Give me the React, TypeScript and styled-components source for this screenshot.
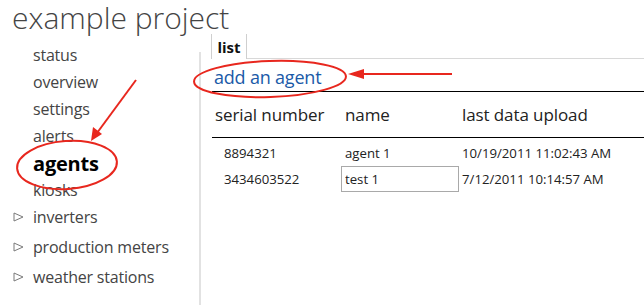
import React, { FC } from 'react';
import styled, { createGlobalStyle } from 'styled-components';

const GlobalStyle = createGlobalStyle`
  html, body {
    margin: 0;
    padding: 0;
    background: #fff;
  }
  body {
    font-family: "Open Sans", "Noto Sans", sans-serif;
    color: #333;
    width: 644px;
    height: 305px;
    overflow: hidden;
  }
`;

const Page = styled.div`
  position: relative;
  width: 644px;
  height: 305px;
`;

const Title = styled.h1`
  margin: 0;
  padding: 2px 0 0 12px;
  height: 32px;
  font-size: 30px;
  font-weight: 300;
  line-height: 32px;
  color: #444;
  letter-spacing: 0;
`;

const Body = styled.div`
  display: flex;
  align-items: flex-start;
`;

const Sidebar = styled.ul`
  list-style: none;
  margin: 0;
  padding: 8px 0 0 0;
  width: 199px;
  flex-shrink: 0;
`;

const NavItem = styled.li<{ $active?: boolean }>`
  padding-left: 33px;
  height: 27px;
  line-height: 27px;
  font-size: ${(p) => (p.$active ? '20px' : '16px')};
  font-weight: ${(p) => (p.$active ? 700 : 400)};
  color: ${(p) => (p.$active ? '#000' : '#444')};
  letter-spacing: ${(p) => (p.$active ? '-0.2px' : '-0.2px')};
`;

const TreeGroup = styled.div`
  margin-top: -2px;
`;

const TreeItem = styled.li`
  display: flex;
  align-items: center;
  height: 30px;
  padding-left: 13px;
  font-size: 16px;
  color: #444;
  letter-spacing: -0.2px;
`;

const Toggle = styled.svg`
  width: 11px;
  height: 10px;
  margin-right: 9px;
  flex-shrink: 0;
`;

const Main = styled.div`
  flex: 1;
  margin-top: 18px;
  border-left: 2px solid #e2e2e2;
  height: 253px;
`;

const TabStrip = styled.div`
  display: flex;
  margin-top: -18px;
  height: 25px;
  padding-left: 10px;
`;

const Tab = styled.div`
  width: 34px;
  border-left: 1px solid #cfcfcf;
  border-right: 1px solid #cfcfcf;
  text-align: center;
  font-size: 15px;
  font-weight: 700;
  line-height: 26px;
  color: #111;
`;

const TabFill = styled.div`
  flex: 1;
  border-bottom: 1px solid #d8d8d8;
`;

const Content = styled.div`
  padding-left: 11px;
`;

const LinkRow = styled.div`
  height: 33px;
  display: flex;
  align-items: center;
  padding-left: 2px;
  border-bottom: 1px solid #000;
  padding-top: 3px;
  box-sizing: border-box;
`;

const AddLink = styled.a`
  font-size: 18px;
  color: #1a5aa8;
  text-decoration: none;
  letter-spacing: -0.2px;
  cursor: pointer;
`;

const Table = styled.div`
  display: grid;
  grid-template-columns: 129px 118px 1fr;
`;

const HeadCell = styled.div<{ $pad: number }>`
  height: 45px;
  display: flex;
  align-items: center;
  padding-left: ${(p) => p.$pad}px;
  font-size: 17px;
  color: #222;
  border-bottom: 1px solid #000;
  letter-spacing: -0.1px;
  margin-bottom: 2px;
`;

const Cell = styled.div<{ $pad: number }>`
  height: 26px;
  display: flex;
  align-items: center;
  padding-left: ${(p) => p.$pad}px;
  font-size: 13.2px;
  color: #222;
  white-space: nowrap;
`;

const NameInput = styled.input`
  box-sizing: border-box;
  width: 118px;
  height: 26px;
  margin: 0;
  padding: 0 3px;
  border: 1px solid #a9a9a9;
  font-family: inherit;
  font-size: 13.2px;
  color: #222;
  outline: none;
`;

const Annotations = styled.svg`
  position: absolute;
  left: 0;
  top: 0;
  width: 644px;
  height: 305px;
  pointer-events: none;
`;

interface Agent {
  serial: string;
  name: string;
  upload: string;
  editing?: boolean;
}

const agents: Agent[] = [
  { serial: '8894321', name: 'agent 1', upload: '10/19/2011 11:02:43 AM' },
  { serial: '3434603522', name: 'test 1', upload: '7/12/2011 10:14:57 AM', editing: true },
];

const navItems = ['status', 'overview', 'settings', 'alerts', 'agents', 'kiosks'];
const treeItems = ['inverters', 'production meters', 'weather stations'];

const TriangleIcon: FC = () => (
  <Toggle viewBox="0 0 11 10">
    <polygon points="1,1 10,5 1,9" fill="none" stroke="#7a7a7a" strokeWidth="1" />
  </Toggle>
);

const RED = '#e8271e';

export default function App() {
  return (
    <Page>
      <GlobalStyle />
      <Title>example project</Title>
      <Body>
        <Sidebar>
          {navItems.map((item) => (
            <NavItem key={item} $active={item === 'agents'}>
              {item}
            </NavItem>
          ))}
          <TreeGroup>
            {treeItems.map((item) => (
              <TreeItem key={item}>
                <TriangleIcon />
                {item}
              </TreeItem>
            ))}
          </TreeGroup>
        </Sidebar>
        <Main>
          <TabStrip>
            <Tab>list</Tab>
            <TabFill />
          </TabStrip>
          <Content>
            <LinkRow>
              <AddLink>add an agent</AddLink>
            </LinkRow>
            <Table>
              <HeadCell $pad={3}>serial number</HeadCell>
              <HeadCell $pad={4}>name</HeadCell>
              <HeadCell $pad={3}>last data upload</HeadCell>
              {agents.map((a) => (
                <React.Fragment key={a.serial}>
                  <Cell $pad={12}>{a.serial}</Cell>
                  <Cell $pad={a.editing ? 0 : 4}>
                    {a.editing ? <NameInput defaultValue={a.name} /> : a.name}
                  </Cell>
                  <Cell $pad={3}>{a.upload}</Cell>
                </React.Fragment>
              ))}
            </Table>
          </Content>
        </Main>
      </Body>
      <Annotations viewBox="0 0 644 305">
        <ellipse cx="67" cy="165" rx="50" ry="24" fill="none" stroke={RED} strokeWidth="2" transform="rotate(-4 67 165)" />
        <line x1="136" y1="80" x2="97" y2="133" stroke={RED} strokeWidth="2" />
        <polygon points="91,141 93,127 102,134" fill={RED} />
        <ellipse cx="270" cy="79" rx="76" ry="18" fill="none" stroke={RED} strokeWidth="2" transform="rotate(-2 270 79)" />
        <line x1="452" y1="74" x2="362" y2="74" stroke={RED} strokeWidth="2" />
        <polygon points="348,74 364,69 364,79" fill={RED} />
      </Annotations>
    </Page>
  );
}
